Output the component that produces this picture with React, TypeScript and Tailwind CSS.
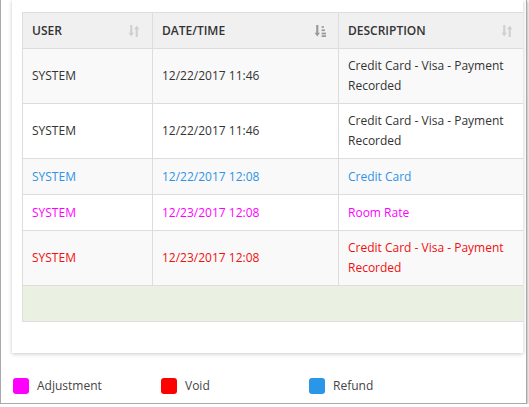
import React from "react";

type Row = {
  user: string;
  date: string;
  desc: string;
  tone: "plain" | "refund" | "adjust" | "void";
};

const rows: Row[] = [
  { user: "SYSTEM", date: "12/22/2017 11:46", desc: "Credit Card - Visa - Payment Recorded", tone: "plain" },
  { user: "SYSTEM", date: "12/22/2017 11:46", desc: "Credit Card - Visa - Payment Recorded", tone: "plain" },
  { user: "SYSTEM", date: "12/22/2017 12:08", desc: "Credit Card", tone: "refund" },
  { user: "SYSTEM", date: "12/23/2017 12:08", desc: "Room Rate", tone: "adjust" },
  { user: "SYSTEM", date: "12/23/2017 12:08", desc: "Credit Card - Visa - Payment Recorded", tone: "void" },
];

const toneClass = {
  plain: "text-[#333333]",
  refund: "text-[#2f93e6]",
  adjust: "text-[#ff00ff]",
  void: "text-[#f01010]",
};

function SortIcon({ active }: { active?: boolean }) {
  if (active) {
    return (
      <svg width="12" height="12" viewBox="0 0 11 11" className="text-[#9a9a9a]">
        <path d="M3 0v8" stroke="currentColor" strokeWidth="2" />
        <path d="M0.5 7h5L3 10.5z" fill="currentColor" />
        <rect x="7" y="1" width="2" height="1.6" fill="currentColor" />
        <rect x="7" y="4" width="3" height="1.6" fill="currentColor" />
        <rect x="7" y="7" width="4" height="1.6" fill="currentColor" />
        <rect x="7" y="9.4" width="4" height="1.6" fill="currentColor" />
      </svg>
    );
  }
  return (
    <svg width="12" height="12" viewBox="0 0 11 11" className="text-[#d0d0d0]">
      <path d="M3 0v8" stroke="currentColor" strokeWidth="2" />
      <path d="M0.5 7h5L3 10.5z" fill="currentColor" />
      <path d="M8 11V3" stroke="currentColor" strokeWidth="2" />
      <path d="M5.5 4h5L8 0.5z" fill="currentColor" />
    </svg>
  );
}

function HeadCell({ label, width, active }: { label: string; width: string; active?: boolean }) {
  return (
    <th className={`${width} border border-[#dddddd] px-[9px] py-0 text-left align-middle font-semibold`}>
      <div className="flex items-center justify-between">
        <span>{label}</span>
        <span className="pr-[3px]">
          <SortIcon active={active} />
        </span>
      </div>
    </th>
  );
}

function Legend({ color, label }: { color: string; label: string }) {
  return (
    <div className="flex w-[148px] items-center gap-2">
      <span className={`h-4 w-4 rounded-[3px] ${color}`} />
      <span>{label}</span>
    </div>
  );
}

export default function App() {
  return (
    <div
      className="h-[404px] w-[527px] overflow-hidden border-x border-b border-[#a9a9a9] bg-white text-[12px] leading-5 text-[#333333] shadow-[1px_1px_3px_rgba(0,0,0,0.3)]"
      style={{ fontFamily: '"Open Sans", "Noto Sans", sans-serif' }}
    >
      <div className="ml-[11px] w-[511px] overflow-hidden bg-white pb-[31px] pl-[10px] pt-[12px] shadow-[0_1px_4px_rgba(0,0,0,0.22)]">
        <table className="w-[503px] table-fixed border-collapse">
          <thead>
            <tr className="h-[36px] bg-[#f0f0f0]">
              <HeadCell label="USER" width="w-[130px]" />
              <HeadCell label="DATE/TIME" width="w-[186px]" active />
              <HeadCell label="DESCRIPTION" width="w-[187px]" />
            </tr>
          </thead>
          <tbody>
            {rows.map((r, i) => (
              <tr
                key={i}
                className={`${r.desc.length > 20 ? "h-[55px]" : "h-[36px]"} ${i % 2 === 0 ? "bg-[#f9f9f9]" : "bg-white"} ${toneClass[r.tone]}`}
              >
                <td className="border border-[#dddddd] px-[9px] py-0 align-middle">{r.user}</td>
                <td className="border border-[#dddddd] px-[9px] py-0 align-middle">{r.date}</td>
                <td className="border border-[#dddddd] px-[9px] py-0 align-middle">{r.desc}</td>
              </tr>
            ))}
            <tr className="h-[36px] bg-[#eaf0e2]">
              <td colSpan={3} className="border border-[#dddddd]" />
            </tr>
          </tbody>
        </table>
      </div>
      <div className="mt-[23px] flex pl-[12px] text-[#444444]">
        <Legend color="bg-[#ff00ff]" label="Adjustment" />
        <Legend color="bg-[#ff0000]" label="Void" />
        <Legend color="bg-[#2a96e8]" label="Refund" />
      </div>
    </div>
  );
}
